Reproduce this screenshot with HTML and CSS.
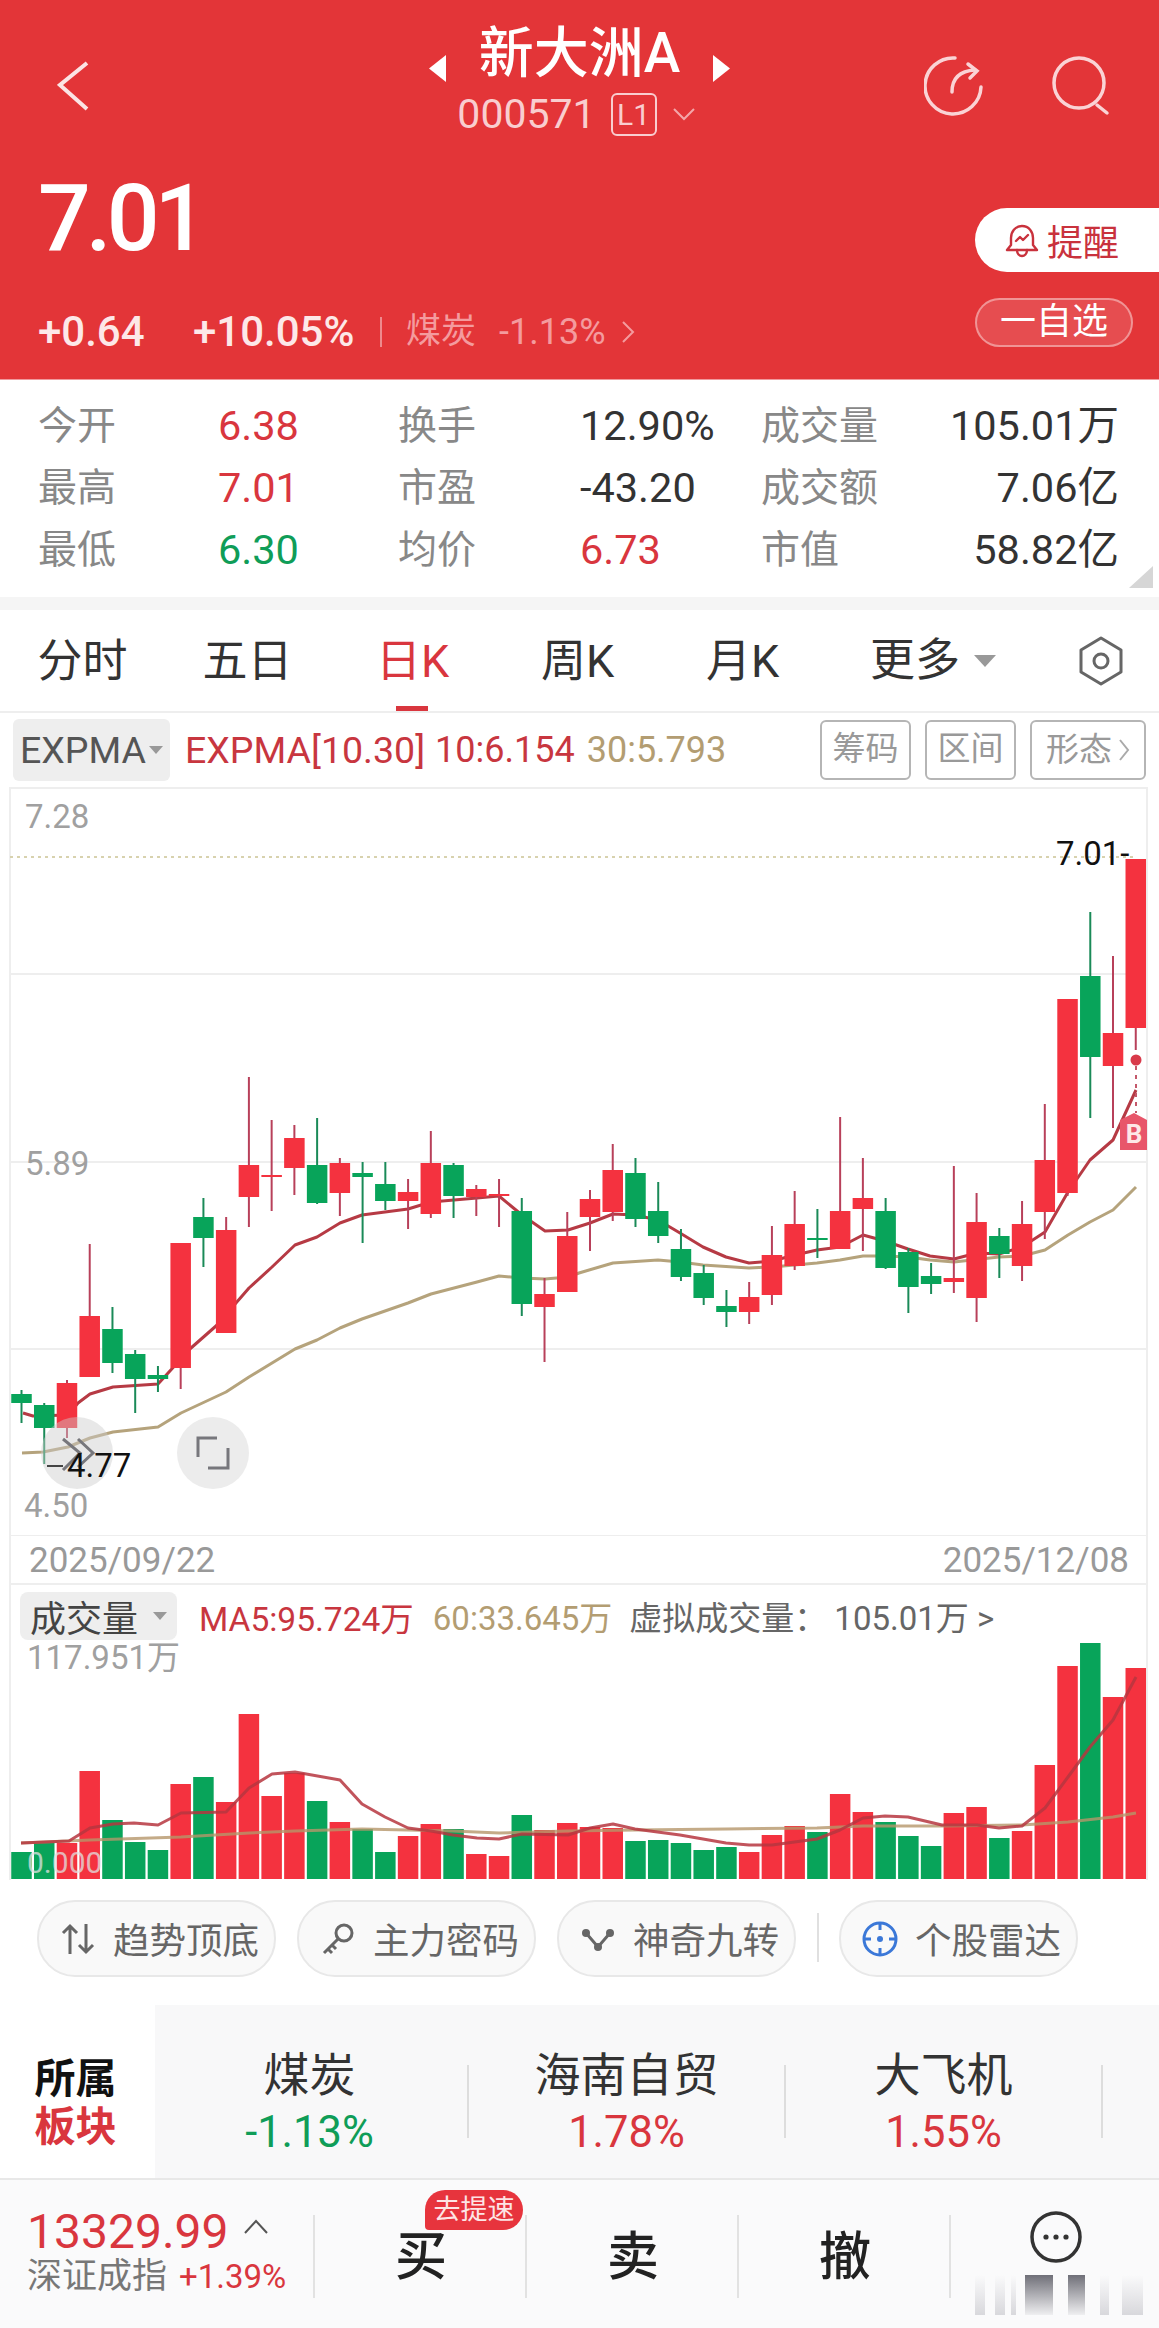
FILE: index.html
```html
<!DOCTYPE html>
<html lang="zh-CN">
<head>
    <meta charset="UTF-8">
    <meta name="viewport" content="width=device-width, initial-scale=1.0">
    <link rel="stylesheet" href="styles.css">
</head>
<body>
    <header class="top">
        <div class="nav">
            <svg class="back" width="34" height="52" viewBox="0 0 34 52"><polyline points="30,3 3,25 30,49"/></svg>
            <div class="nav-title">
                <div class="title-row">
                    <svg class="title-arrow" width="19" height="27" viewBox="0 0 19 27"><polygon points="18,0 18,27 1,13.5"/></svg>
                    <span class="title">新大洲A</span>
                    <svg class="title-arrow" width="19" height="27" viewBox="0 0 19 27"><polygon points="1,0 1,27 18,13.5"/></svg>
                </div>
                <div class="code-row">
                    <span class="code">000571</span>
                    <span class="level">L1</span>
                    <svg class="code-drop" width="24" height="14" viewBox="0 0 24 14"><polyline points="2,2 12,12 22,2"/></svg>
                </div>
            </div>
            <div class="nav-icons">
                <svg class="line-icon" width="60" height="60" viewBox="0 0 60 60">
                    <path d="M31 2A28 28 0 1 0 57 31"/>
                    <path d="M28 36C28 24 34 15 51 14"/>
                    <path d="M44 8l9 7-7 7"/>
                </svg>
                <svg class="line-icon" width="58" height="60" viewBox="0 0 58 60">
                    <circle cx="27" cy="27" r="25"/>
                    <path d="M45 49l10 8"/>
                </svg>
            </div>
        </div>
        <div class="quote">
            <div class="quote-left">
                <div class="price">7.01</div>
                <div class="change">
                    <span class="chg-a">+0.64</span>
                    <span class="chg-b">+10.05%</span>
                    <span class="chg-sep"></span>
                    <span class="chg-plate">煤炭</span>
                    <span class="chg-rate">-1.13%</span>
                    <svg class="chg-more" width="14" height="24" viewBox="0 0 14 24"><polyline points="2,2 12,12 2,22"/></svg>
                </div>
            </div>
            <div class="quote-right">
                <div class="btn-alert">
                    <svg class="bell" width="34" height="35" viewBox="0 0 34 35">
                        <path d="M17 3C10 3 6 9 6 15v7l-4 5h30l-4-5v-7C28 9 24 3 17 3z"/>
                        <path d="M12 27c0 4 2.5 6 5 6s5-2 5-6"/>
                        <path d="M11 18l4-4 3 3 5-5"/>
                    </svg>
                    <span>提醒</span>
                </div>
                <div class="btn-watch">一自选</div>
            </div>
        </div>
    </header>

    <section class="stats">
        <span class="lbl">今开</span><span class="val up">6.38</span>
        <span class="lbl">换手</span><span class="val">12.90%</span>
        <span class="lbl">成交量</span><span class="val end">105.01万</span>
        <span class="lbl">最高</span><span class="val up">7.01</span>
        <span class="lbl">市盈</span><span class="val">-43.20</span>
        <span class="lbl">成交额</span><span class="val end">7.06亿</span>
        <span class="lbl">最低</span><span class="val down">6.30</span>
        <span class="lbl">均价</span><span class="val up">6.73</span>
        <span class="lbl">市值</span><span class="val end">58.82亿</span>
        <span class="corner"></span>
    </section>
    <div class="strip"></div>

    <nav class="tabs">
        <span class="tab">分时</span>
        <span class="tab">五日</span>
        <span class="tab active">日K</span>
        <span class="tab">周K</span>
        <span class="tab">月K</span>
        <span class="tab more">更多<i class="tri"></i></span>
        <svg class="hex" width="46" height="50" viewBox="0 0 46 50">
            <polygon points="23,2 43,14 43,36 23,48 3,36 3,14"/>
            <circle cx="23" cy="25" r="7"/>
        </svg>
    </nav>

    <div class="ind-row">
        <div class="ind-btn">EXPMA<i class="tri small"></i></div>
        <span class="ind-a">EXPMA[10.30]</span>
        <span class="ind-b">10:6.154</span>
        <span class="ind-c">30:5.793</span>
        <div class="tools">
            <span class="tool">筹码</span>
            <span class="tool">区间</span>
            <span class="tool wide">形态<svg width="12" height="24" viewBox="0 0 12 24"><polyline points="2,2 10,12 2,22"/></svg></span>
        </div>
    </div>

    <svg class="kline" width="1159" height="749" viewBox="0 787 1159 749">
        <g class="grid">
            <line x1="10" y1="788" x2="1147" y2="788"/>
            <line x1="10" y1="974" x2="1147" y2="974"/>
            <line x1="10" y1="1162" x2="1147" y2="1162"/>
            <line x1="10" y1="1349" x2="1147" y2="1349"/>
            <line x1="10" y1="1536" x2="1147" y2="1536"/>
            <line x1="10" y1="787" x2="10" y2="1536"/>
            <line x1="1147" y1="787" x2="1147" y2="1536"/>
        </g>
        <line class="last-price" x1="10" y1="857" x2="1135" y2="857"/>
        <g id="maLines"></g>
        <g id="candles"></g>
        <line class="sig-dash" x1="1136" y1="1066" x2="1136" y2="1113"/>
        <circle class="sig-dot" cx="1136" cy="1060" r="5.5"/>
        <polygon class="sig-tag" points="1120,1120 1134,1113 1147,1120 1147,1150 1120,1150"/>
        <text class="sig-b" x="1134" y="1143" text-anchor="middle">B</text>
        <circle class="round-btn see" cx="77" cy="1453" r="36"/>
        <path class="round-ico" d="M63 1439l17 14-17 17M78 1439l15 14-15 14"/>
        <circle class="round-btn" cx="213" cy="1453" r="36"/>
        <path class="round-ico" d="M198 1457v-19h19M208 1468h20v-20"/>
        <text class="ax" x="25" y="828">7.28</text>
        <text class="ax" x="25" y="1175">5.89</text>
        <text class="ax" x="24" y="1517">4.50</text>
        <text class="ax dark" x="1056" y="865">7.01-</text>
        <line class="low-tick" x1="47" y1="1466" x2="63" y2="1466"/>
        <text class="ax dark" x="67" y="1477">4.77</text>
    </svg>

    <div class="dates">
        <span>2025/09/22</span>
        <span>2025/12/08</span>
    </div>

    <div class="vol-head">
        <div class="vol-btn">成交量<i class="tri small"></i></div>
        <span class="vol-a">MA5:95.724万</span>
        <span class="vol-b">60:33.645万</span>
        <span class="vol-c">虚拟成交量：<span class="vol-num">105.01万 &gt;</span></span>
    </div>
    <svg class="vol" width="1159" height="240" viewBox="0 1640 1159 240">
        <g class="grid">
            <line x1="10" y1="1640" x2="10" y2="1880"/>
            <line x1="1147" y1="1640" x2="1147" y2="1880"/>
        </g>
        <g id="volBars"></g>
        <g id="volLines"></g>
        <text class="ax" x="27" y="1669">117.951万</text>
        <text class="ax ghost" x="27" y="1873">0.000</text>
    </svg>

    <div class="chips">
        <div class="chip">
            <svg class="chip-ico" width="36" height="36" viewBox="0 0 36 36"><path d="M10 33V5M3 12l7-7 7 7M26 3v28M19 24l7 7 7-7"/></svg>
            <span>趋势顶底</span>
        </div>
        <div class="chip">
            <svg class="chip-ico" width="36" height="36" viewBox="0 0 36 36"><circle cx="24" cy="12" r="8"/><path d="M18 18L4 32M8 28l4 4M12 24l4 4"/></svg>
            <span>主力密码</span>
        </div>
        <div class="chip">
            <svg class="chip-ico" width="36" height="36" viewBox="0 0 36 36"><path d="M6 12l12 14 12-14"/><circle class="fill" cx="6" cy="12" r="4"/><circle class="fill" cx="18" cy="26" r="4"/><circle class="fill" cx="30" cy="12" r="4"/></svg>
            <span>神奇九转</span>
        </div>
        <span class="chip-sep"></span>
        <div class="chip">
            <svg class="chip-ico blue" width="36" height="36" viewBox="0 0 36 36"><circle cx="18" cy="18" r="16"/><path d="M18 1v8M18 27v8M1 18h8M27 18h8"/><circle class="fill" cx="18" cy="18" r="3"/></svg>
            <span>个股雷达</span>
        </div>
    </div>

    <section class="plates">
        <div class="plates-head">
            <span>所属</span>
            <span class="up">板块</span>
        </div>
        <div class="plate">
            <span class="plate-name">煤炭</span>
            <span class="plate-rate down">-1.13%</span>
        </div>
        <div class="plate">
            <span class="plate-name">海南自贸</span>
            <span class="plate-rate up">1.78%</span>
        </div>
        <div class="plate">
            <span class="plate-name">大飞机</span>
            <span class="plate-rate up">1.55%</span>
        </div>
    </section>

    <footer class="bottom">
        <div class="cell index">
            <div class="index-val"><span class="up">13329.99</span><svg width="26" height="16" viewBox="0 0 26 16"><polyline points="2,14 13,2 24,14"/></svg></div>
            <div class="index-name">深证成指<span class="up">+1.39%</span></div>
        </div>
        <div class="cell action">买<span class="badge">去提速</span></div>
        <div class="cell action">卖</div>
        <div class="cell action">撤</div>
        <div class="cell menu">
            <svg class="menu-ico" width="54" height="54" viewBox="0 0 54 54">
                <circle cx="27" cy="27" r="24"/>
                <circle class="fill" cx="17" cy="27" r="2.6"/>
                <circle class="fill" cx="27" cy="27" r="2.6"/>
                <circle class="fill" cx="37" cy="27" r="2.6"/>
            </svg>
            <svg class="menu-mark" width="208" height="40" viewBox="0 0 208 40">
                <defs>
                    <linearGradient id="fadeDark" x1="0" y1="0" x2="0" y2="1"><stop offset="0" stop-color="#6f6f78"/><stop offset="1" stop-color="#6f6f78" stop-opacity="0.08"/></linearGradient>
                    <linearGradient id="fadeLight" x1="0" y1="0" x2="0" y2="1"><stop offset="0" stop-color="#d8d8dc" stop-opacity="0"/><stop offset="1" stop-color="#d8d8dc"/></linearGradient>
                </defs>
                <rect x="24" width="10" height="40" fill="url(#fadeLight)"/>
                <rect x="44" width="10" height="40" fill="url(#fadeLight)"/>
                <rect x="60" width="5" height="40" fill="url(#fadeLight)"/>
                <rect x="74" width="28" height="40" fill="url(#fadeDark)"/>
                <rect x="117" width="17" height="40" fill="url(#fadeDark)"/>
                <rect x="149" width="9" height="40" fill="url(#fadeLight)"/>
                <rect x="171" width="21" height="40" fill="url(#fadeLight)"/>
            </svg>
        </div>
    </footer>

    <script src="chart.js"></script>
</body>
</html>
```

FILE: styles.css
```css
* {
    box-sizing: border-box;
}

body {
    margin: 0;
    width: 1159px;
    height: 2328px;
    overflow: hidden;
    background: #fff;
    color: #333;
    font-family: Roboto, "Noto Sans CJK SC", sans-serif;
}

svg {
    display: block;
}

.up {
    color: #d9363e;
}

.down {
    color: #0f9d58;
}

.tri {
    display: inline-block;
    width: 0;
    height: 0;
    border-left: 11px solid transparent;
    border-right: 11px solid transparent;
    border-top: 12px solid #999;
}

.tri.small {
    border-left-width: 7px;
    border-right-width: 7px;
    border-top-width: 8px;
}

/* red header */
.top {
    height: 380px;
    background: #e33538;
    border-bottom: 1px solid #f09a9d;
    color: #fff;
}

.nav {
    display: grid;
    grid-template-columns: 1fr auto 1fr;
    height: 150px;
}

.back {
    margin: 60px 0 0 57px;
    fill: none;
    stroke: #fbe4e4;
    stroke-width: 4;
}

.nav-title {
    padding-top: 15px;
}

.title-row {
    display: flex;
    justify-content: center;
    align-items: flex-end;
    gap: 32px;
    height: 76px;
}

.title {
    font-size: 55px;
    font-weight: 500;
    line-height: 76px;
}

.title-arrow {
    margin-bottom: 9px;
    fill: #fff;
}

.code-row {
    display: flex;
    align-items: center;
    justify-content: center;
    gap: 15px;
    height: 44px;
    margin-top: 1px;
    color: #f9cdcf;
}

.code {
    font-size: 41px;
    line-height: 44px;
    margin-left: -6px;
}

.level {
    width: 46px;
    height: 43px;
    border: 2px solid #f9cdcf;
    border-radius: 6px;
    font-size: 30px;
    line-height: 39px;
    text-align: center;
}

.code-drop {
    fill: none;
    stroke: #f4a6a9;
    stroke-width: 2;
}

.nav-icons {
    display: flex;
    justify-content: flex-end;
    gap: 68px;
    padding: 56px 49px 0 0;
}

.line-icon {
    fill: none;
    stroke: #fad3d5;
    stroke-width: 3.5;
    stroke-linecap: round;
}

.quote {
    display: flex;
    justify-content: space-between;
}

.quote-left {
    padding-left: 38px;
}

.price {
    height: 157px;
    padding-top: 24px;
    font-size: 93px;
    line-height: 90px;
    font-weight: 500;
    letter-spacing: -5px;
}

.change {
    display: flex;
    align-items: center;
    height: 50px;
    font-size: 42px;
    line-height: 50px;
    font-weight: 500;
    color: #fde8e8;
}

.chg-a {
    width: 155px;
}

.chg-b {
    width: 187px;
}

.chg-sep {
    width: 2px;
    height: 30px;
    background: #ee8a8d;
    margin-right: 24px;
}

.chg-plate {
    width: 93px;
    font-size: 35px;
    font-weight: 400;
    color: #f49b9e;
}

.chg-rate {
    width: 122px;
    font-size: 36px;
    font-weight: 400;
    color: #f49b9e;
}

.chg-more {
    fill: none;
    stroke: #f49b9e;
    stroke-width: 2;
}

.quote-right {
    width: 184px;
    padding-top: 58px;
}

.btn-alert {
    display: flex;
    align-items: center;
    height: 64px;
    padding-left: 30px;
    gap: 8px;
    background: #fff;
    border-radius: 32px 0 0 32px;
    color: #c9323d;
    font-size: 36px;
}

.bell {
    fill: none;
    stroke: #c9323d;
    stroke-width: 2.4;
    stroke-linecap: round;
    stroke-linejoin: round;
}

.btn-watch {
    width: 158px;
    height: 49px;
    margin-top: 26px;
    border: 2px solid rgba(255, 255, 255, 0.4);
    border-radius: 25px;
    background: rgba(255, 255, 255, 0.12);
    font-size: 36px;
    line-height: 44px;
    text-align: center;
}

/* quote table */
.stats {
    position: relative;
    display: grid;
    grid-template-columns: 180px 180px 182px 181px 150px 208px;
    grid-auto-rows: 62px;
    height: 217px;
    padding: 15px 0 0 38px;
    font-size: 41.5px;
    line-height: 62px;
}

.lbl {
    color: #888;
    font-size: 39px;
}

.val.end {
    text-align: right;
}

.corner {
    position: absolute;
    right: 6px;
    bottom: 9px;
    width: 0;
    height: 0;
    border-left: 24px solid transparent;
    border-bottom: 22px solid #d6d6d6;
}

.strip {
    height: 13px;
    background: #f5f5f5;
}

/* period tabs */
.tabs {
    display: flex;
    align-items: center;
    height: 103px;
    border-bottom: 2px solid #eee;
    font-size: 45px;
}

.tab {
    position: relative;
    width: 165px;
    height: 101px;
    line-height: 103px;
    text-align: center;
}

.tab.active {
    color: #d9363e;
}

.tab.active::after {
    content: "";
    position: absolute;
    left: 66px;
    bottom: 0;
    width: 32px;
    height: 5px;
    background: #d9363e;
}

.tab.more {
    display: flex;
    align-items: center;
    gap: 14px;
    width: auto;
    margin-left: 45px;
}

.hex {
    margin-left: auto;
    margin-right: 35px;
    fill: none;
    stroke: #666;
    stroke-width: 3;
    stroke-linejoin: round;
}

/* indicator row */
.ind-row {
    display: flex;
    align-items: center;
    height: 74px;
    padding: 0 13px;
    font-size: 37.5px;
}

.ind-btn {
    display: flex;
    align-items: center;
    gap: 3px;
    width: 157px;
    height: 62px;
    padding-left: 7px;
    background: #eee;
    border-radius: 6px;
    color: #555;
}

.ind-a {
    margin-left: 15px;
    color: #c8363f;
}

.ind-b {
    margin-left: 10px;
    font-size: 36px;
    color: #c8363f;
}

.ind-c {
    margin-left: 12px;
    font-size: 36px;
    color: #b39d72;
}

.tools {
    display: flex;
    gap: 14px;
    margin-left: auto;
}

.tool {
    width: 91px;
    height: 60px;
    border: 2px solid #b5b5b5;
    border-radius: 6px;
    color: #999;
    font-size: 33px;
    line-height: 54px;
    text-align: center;
}

.tool.wide {
    display: flex;
    align-items: center;
    justify-content: center;
    gap: 6px;
    width: 116px;
}

.tool svg {
    fill: none;
    stroke: #aaa;
    stroke-width: 2;
}

/* charts */
.vol {
    overflow: visible;
}

.grid line {
    stroke: #eee;
    stroke-width: 2;
}

.last-price {
    stroke: #d8d2ae;
    stroke-width: 2;
    stroke-dasharray: 3 4;
}

.ax {
    font-size: 33px;
    fill: #a0a0a0;
}

.ax.dark {
    fill: #111;
}

.ax.ghost {
    font-size: 30px;
    fill: rgba(225, 225, 225, 0.75);
}

.low-tick {
    stroke: #444;
    stroke-width: 2;
}

.sig-dash {
    stroke: #c4586a;
    stroke-width: 2;
    stroke-dasharray: 4 5;
}

.sig-dot {
    fill: #d93a4a;
}

.sig-tag {
    fill: #e8566a;
}

.sig-b {
    font-size: 26px;
    font-weight: 700;
    fill: #fde8e8;
}

.round-btn {
    fill: #ececec;
}

.round-btn.see {
    fill: rgba(205, 205, 205, 0.45);
}

.round-ico {
    fill: none;
    stroke: #77777c;
    stroke-width: 3;
}

.dates {
    display: flex;
    justify-content: space-between;
    height: 49px;
    margin: 0 11px 0 9px;
    padding: 0 17px 0 18px;
    border-left: 2px solid #eee;
    border-right: 2px solid #eee;
    border-bottom: 2px solid #eee;
    color: #999;
    font-size: 35px;
    line-height: 50px;
}

.vol-head {
    display: flex;
    align-items: center;
    height: 55px;
    margin: 0 11px 0 9px;
    padding: 7px 0 0 9px;
    border-left: 2px solid #eee;
    border-right: 2px solid #eee;
    font-size: 33px;
}

.vol-btn {
    display: flex;
    align-items: center;
    gap: 15px;
    width: 157px;
    height: 48px;
    padding-left: 10px;
    background: #eee;
    border-radius: 8px;
    color: #444;
    font-size: 36px;
}

.vol-a {
    margin-left: 22px;
    font-size: 33.5px;
    color: #c8363f;
}

.vol-b {
    margin-left: 19px;
    color: #b39d72;
}

.vol-c {
    margin-left: 17px;
    color: #666;
}

.vol-num {
    margin-left: 7px;
}

/* shortcut chips */
.chips {
    display: flex;
    align-items: flex-start;
    gap: 21px;
    height: 125px;
    padding: 20px 0 0 37px;
}

.chip {
    display: flex;
    align-items: center;
    gap: 17px;
    width: 239px;
    height: 77px;
    padding-left: 21px;
    background: #f9f9f9;
    border: 2px solid #e8e8e8;
    border-radius: 38px;
    color: #666;
    font-size: 36.5px;
}

.chip-ico {
    flex: none;
    fill: none;
    stroke: #666;
    stroke-width: 3;
}

.chip-ico .fill {
    fill: #666;
    stroke: none;
}

.chip-ico.blue {
    stroke: #3b78d8;
}

.chip-ico.blue .fill {
    fill: #3b78d8;
}

.chip-sep {
    width: 2px;
    height: 49px;
    margin: 13px -1px 0 0;
    background: #e0e0e0;
}

/* plates */
.plates {
    display: flex;
    height: 173px;
    background: #f8f8f9;
}

.plates-head {
    display: flex;
    flex-direction: column;
    justify-content: center;
    align-items: center;
    width: 155px;
    padding: 22px 4px 0 0;
    background: #fff;
    font-size: 41px;
    font-weight: 700;
    line-height: 48px;
    color: #111;
}

.plates-head .up {
    color: #d9363e;
}

.plate {
    position: relative;
    display: flex;
    flex-direction: column;
    align-items: center;
    width: 317px;
    padding-top: 42px;
}

.plate:nth-child(2) {
    width: 313px;
    padding-right: 4px;
}

.plate::after {
    content: "";
    position: absolute;
    right: -1px;
    top: 60px;
    width: 2px;
    height: 73px;
    background: #ddd;
}

.plate-name {
    font-size: 46px;
    line-height: 56px;
}

.plate-rate {
    margin-top: 5px;
    font-size: 43.5px;
    line-height: 50px;
}

/* bottom bar */
.bottom {
    display: flex;
    height: 150px;
    background: #fafafb;
    border-top: 2px solid #e8e8e8;
}

.cell {
    position: relative;
    width: 212px;
}

.cell.index {
    width: 315px;
    padding: 25px 0 0 27px;
}

.cell.index::after,
.cell.action::after {
    content: "";
    position: absolute;
    right: 0;
    top: 35px;
    width: 2px;
    height: 83px;
    background: #e2e2e2;
}

.index-val {
    display: flex;
    align-items: center;
    gap: 14px;
    font-size: 48px;
    line-height: 54px;
}

.index-val svg {
    margin-bottom: 10px;
    fill: none;
    stroke: #555;
    stroke-width: 2;
}

.index-name {
    display: flex;
    gap: 12px;
    margin-top: -2px;
    color: #777;
    font-size: 35px;
    line-height: 40px;
}

.index-name .up {
    font-size: 33px;
}

.cell.action {
    padding-top: 4px;
    color: #222;
    font-size: 52px;
    font-weight: 500;
    line-height: 148px;
    text-align: center;
}

.badge {
    position: absolute;
    left: 110px;
    top: 10px;
    width: 98px;
    height: 40px;
    background: #e7343d;
    border-radius: 20px 20px 20px 4px;
    color: #fde4e5;
    font-size: 27px;
    font-weight: 400;
    line-height: 40px;
}

.cell.menu {
    width: 208px;
}

.menu-ico {
    margin: 30px 0 0 78px;
    fill: none;
    stroke: #333;
    stroke-width: 3.5;
}

.menu-ico .fill {
    fill: #333;
    stroke: none;
}

.menu-mark {
    margin-top: 11px;
}
```

FILE: chart.js
```js
// daily candles: type, wick top, body top, body bottom, wick bottom (y in page pixels)
const candles = [
    ['g', 1390, 1394, 1403, 1423], ['g', 1403, 1405, 1428, 1464], ['r', 1380, 1383, 1428, 1438],
    ['r', 1244, 1316, 1377, 1377], ['g', 1307, 1329, 1363, 1373], ['g', 1350, 1354, 1379, 1413],
    ['g', 1366, 1375, 1379, 1392], ['r', 1243, 1243, 1368, 1389], ['g', 1198, 1217, 1238, 1267],
    ['r', 1217, 1230, 1333, 1333], ['r', 1077, 1165, 1197, 1227], ['r', 1120, 1175, 1177, 1211],
    ['r', 1125, 1138, 1168, 1195], ['g', 1118, 1165, 1203, 1204], ['r', 1158, 1163, 1193, 1216],
    ['g', 1162, 1173, 1177, 1243], ['g', 1162, 1184, 1201, 1210], ['r', 1179, 1192, 1201, 1229],
    ['r', 1131, 1163, 1214, 1218], ['g', 1163, 1165, 1196, 1218], ['r', 1185, 1189, 1197, 1216],
    ['r', 1179, 1194, 1196, 1227], ['g', 1198, 1211, 1304, 1316], ['r', 1278, 1294, 1307, 1362],
    ['r', 1212, 1236, 1292, 1292], ['r', 1190, 1199, 1217, 1251], ['r', 1144, 1170, 1212, 1221],
    ['g', 1158, 1173, 1219, 1227], ['g', 1182, 1211, 1236, 1243], ['g', 1229, 1249, 1277, 1281],
    ['g', 1265, 1273, 1298, 1305], ['g', 1290, 1306, 1312, 1327], ['r', 1282, 1297, 1312, 1324],
    ['r', 1226, 1255, 1295, 1305], ['r', 1191, 1224, 1266, 1270], ['g', 1209, 1238, 1240, 1258],
    ['r', 1117, 1211, 1249, 1249], ['r', 1158, 1198, 1209, 1251], ['g', 1198, 1211, 1268, 1269],
    ['g', 1248, 1252, 1287, 1313], ['g', 1263, 1276, 1284, 1294], ['r', 1166, 1278, 1282, 1293],
    ['r', 1193, 1222, 1298, 1322], ['g', 1228, 1236, 1254, 1278], ['r', 1201, 1224, 1266, 1281],
    ['r', 1104, 1160, 1212, 1239], ['r', 999, 999, 1193, 1196], ['g', 912, 976, 1057, 1118],
    ['r', 956, 1033, 1066, 1128], ['r', 859, 859, 1028, 1050]
];

// volume bars: top of each bar
const volTops = [
    1852, 1843, 1843, 1771, 1820, 1842, 1850, 1784, 1777, 1802,
    1714, 1796, 1773, 1801, 1822, 1829, 1852, 1836, 1824, 1829,
    1854, 1856, 1815, 1830, 1823, 1827, 1828, 1841, 1840, 1843,
    1850, 1847, 1852, 1835, 1826, 1832, 1794, 1812, 1822, 1836,
    1846, 1813, 1807, 1838, 1831, 1765, 1666, 1643, 1697, 1668
];

const ema10 = [
    [23, 1413], [33, 1416], [68, 1415], [78, 1403], [90, 1394], [113, 1387], [158, 1384], [191, 1348],
    [216, 1326], [249, 1288], [272, 1267], [295, 1245], [317, 1237], [340, 1223], [362, 1215], [408, 1209],
    [431, 1202], [477, 1198], [499, 1196], [522, 1215], [545, 1231], [568, 1230], [590, 1223], [613, 1214],
    [635, 1215], [658, 1220], [680, 1233], [703, 1247], [726, 1257], [749, 1263], [772, 1261], [795, 1255],
    [817, 1250], [840, 1247], [863, 1235], [885, 1241], [908, 1249], [930, 1256], [954, 1259], [977, 1253],
    [999, 1254], [1022, 1247], [1045, 1232], [1068, 1192], [1090, 1160], [1113, 1140], [1136, 1090]
];

const ema30 = [
    [22, 1453], [43, 1452], [68, 1447], [90, 1438], [113, 1432], [158, 1427], [181, 1413], [226, 1392],
    [249, 1377], [295, 1349], [317, 1340], [340, 1328], [362, 1319], [408, 1303], [431, 1294], [477, 1282],
    [499, 1276], [522, 1278], [545, 1279], [568, 1277], [579, 1273], [613, 1263], [658, 1260], [680, 1262],
    [703, 1265], [749, 1268], [772, 1267], [817, 1263], [840, 1260], [863, 1256], [885, 1256], [908, 1257],
    [930, 1260], [954, 1262], [999, 1257], [1022, 1256], [1045, 1250], [1068, 1235], [1090, 1222],
    [1113, 1210], [1136, 1187]
];

const volMa5 = [
    [21, 1843], [69, 1841], [90, 1828], [113, 1824], [134, 1823], [158, 1825], [181, 1813], [226, 1812],
    [249, 1788], [272, 1774], [295, 1772], [340, 1780], [362, 1804], [385, 1817], [408, 1828], [431, 1831],
    [453, 1835], [477, 1838], [499, 1839], [522, 1834], [568, 1835], [590, 1828], [613, 1824], [635, 1829],
    [680, 1835], [726, 1843], [749, 1845], [772, 1845], [817, 1839], [840, 1830], [863, 1818], [885, 1816],
    [908, 1817], [942, 1825], [977, 1825], [999, 1828], [1022, 1826], [1045, 1808], [1068, 1777],
    [1090, 1747], [1113, 1720], [1136, 1677]
];

const volMa60 = [
    [21, 1843], [90, 1840], [181, 1837], [249, 1833], [295, 1831], [362, 1829], [453, 1831], [499, 1833],
    [568, 1831], [635, 1830], [726, 1829], [817, 1828], [863, 1826], [942, 1826], [1022, 1825],
    [1068, 1822], [1113, 1817], [1136, 1813]
];

const RED = '#f4323f';
const GREEN = '#08a45a';
const STEP = 22.74;
const BODY = 20.5;

function el(parent, name, attrs) {
    const node = document.createElementNS('http://www.w3.org/2000/svg', name);
    for (const key in attrs) {
        node.setAttribute(key, attrs[key]);
    }
    parent.appendChild(node);
}

function xAt(i) {
    return 21.5 + STEP * i;
}

function drawLine(parent, points, color, width, opacity) {
    el(parent, 'polyline', {
        points: points.map(p => p.join(',')).join(' '),
        fill: 'none',
        stroke: color,
        'stroke-width': width,
        'stroke-linejoin': 'round',
        opacity: opacity
    });
}

const maLines = document.getElementById('maLines');
drawLine(maLines, ema30, '#b5a37c', 3, 1);
drawLine(maLines, ema10, '#b63a44', 3, 1);

const candleGroup = document.getElementById('candles');
candles.forEach((c, i) => {
    const x = xAt(i);
    const color = c[0] === 'r' ? RED : GREEN;
    el(candleGroup, 'line', {
        x1: x, x2: x, y1: c[1], y2: c[4],
        stroke: c[0] === 'r' ? '#b8405a' : '#1a8a58',
        'stroke-width': 2
    });
    el(candleGroup, 'rect', {
        x: x - BODY / 2, y: c[2], width: BODY, height: c[3] - c[2], fill: color
    });
});

const volBars = document.getElementById('volBars');
volTops.forEach((top, i) => {
    el(volBars, 'rect', {
        x: xAt(i) - BODY / 2, y: top, width: BODY, height: 1879 - top,
        fill: candles[i][0] === 'r' ? RED : GREEN
    });
});

const volLines = document.getElementById('volLines');
drawLine(volLines, volMa60, '#b5966a', 3, 0.8);
drawLine(volLines, volMa5, '#b6363f', 3, 0.85);
```
